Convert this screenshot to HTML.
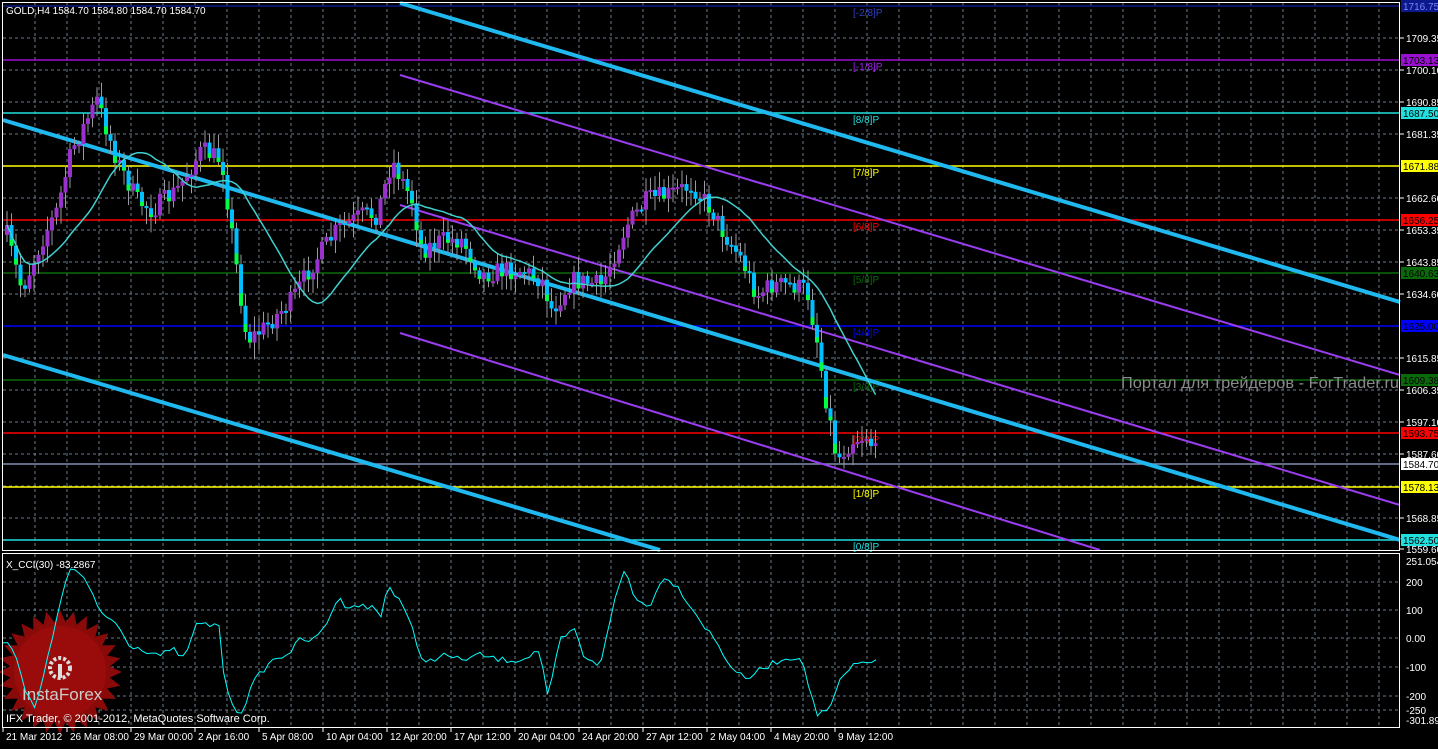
<!DOCTYPE html>
<html><head><meta charset="utf-8"><style>
html,body{margin:0;padding:0;background:#000;}
body{width:1438px;height:744px;overflow:hidden;font-family:"Liberation Sans",sans-serif;}
svg text{font-family:"Liberation Sans",sans-serif;font-size:10px;}
</style></head><body>
<svg id="s" width="1438" height="744" xmlns="http://www.w3.org/2000/svg">
<rect width="1438" height="744" fill="#000"/>
<g id="grid"></g>
<g id="levels"></g>
<g id="chan" stroke-linecap="butt">
<line x1="400" y1="3" x2="1400" y2="302" stroke="#1fb8ef" stroke-width="4"/>
<line x1="3" y1="120" x2="1400" y2="540" stroke="#1fb8ef" stroke-width="4"/>
<line x1="3" y1="355" x2="660" y2="550" stroke="#1fb8ef" stroke-width="4"/>
<line x1="400" y1="75" x2="1400" y2="375" stroke="#9a3df0" stroke-width="2"/>
<line x1="400" y1="205" x2="1400" y2="505" stroke="#9a3df0" stroke-width="2"/>
<line x1="400" y1="333" x2="1100" y2="550" stroke="#9a3df0" stroke-width="2"/>
</g>
<g id="candles"></g>
<polyline id="ma" fill="none" stroke="#40d0d0" stroke-width="1.5"/>
<text x="1121" y="388" fill="#8a8a8a" style="font-size:16px" textLength="278" lengthAdjust="spacingAndGlyphs">Портал для трейдеров - ForTrader.ru</text>
<g id="star"></g>
<polyline id="cci" fill="none" stroke="#00ffff" stroke-width="1"/>
<g id="axis"></g>
<text x="6" y="14" fill="#fff">GOLD,H4  1584.70 1584.80 1584.70 1584.70</text>
<text x="6" y="568" fill="#fff">X_CCI(30) -83.2867</text>
<text x="6" y="722" fill="#fff" style="font-size:11px">IFX Trader, © 2001-2012, MetaQuotes Software Corp.</text>
<rect x="2.5" y="2.5" width="1397" height="548" fill="none" stroke="#fff"/>
<rect x="2.5" y="553.5" width="1397" height="174" fill="none" stroke="#fff"/>
</svg>
<script>
(function(){
var NS="http://www.w3.org/2000/svg";
function el(t,a,p){var e=document.createElementNS(NS,t);for(var k in a)e.setAttribute(k,a[k]);(p||document.getElementById('s')).appendChild(e);return e;}
var grid=document.getElementById('grid'),axis=document.getElementById('axis'),lv=document.getElementById('levels');
for(var x=35;x<1400;x+=32){el('line',{x1:x,y1:3,x2:x,y2:550,stroke:'#6a7a8c','stroke-dasharray':'3,3'},grid);el('line',{x1:x,y1:554,x2:x,y2:727,stroke:'#6a7a8c','stroke-dasharray':'3,3'},grid);}
var hp=[[38,'1709.35'],[70,'1700.10'],[102,'1690.85'],[134,'1681.35'],[166,''],[198,'1662.60'],[230,'1653.35'],[262,'1643.85'],[294,'1634.60'],[326,''],[358,'1615.85'],[390,'1606.35'],[422,'1597.10'],[454,'1587.60'],[486,''],[518,'1568.85'],[549,'1559.60']];
hp.forEach(function(h){if(h[0]<549)el('line',{x1:3,y1:h[0],x2:1400,y2:h[0],stroke:'#6a7a8c','stroke-dasharray':'3,3'},grid);if(h[1]){el('line',{x1:1400,y1:h[0],x2:1404,y2:h[0],stroke:'#fff'},axis);var t=el('text',{x:1406,y:h[0]+4,fill:'#fff'},axis);t.textContent=h[1];}});
var L=[[6,'#0a1a8a','1716.75','[-2/8]P'],[60,'#9a10d0','1703.13','[-1/8]P'],[113,'#20e0e0','1687.50','[8/8]P'],[166,'#ffff00','1671.88','[7/8]P'],[220,'#ff0000','1656.25','[6/8]P'],[273,'#0a6a0a','1640.63','[5/8]P'],[326,'#0000ff','1625.00','[4/8]P'],[380,'#0a6a0a','1609.38','[3/8]P'],[433,'#ff0000','1593.75','[2/8]P'],[464,'#8090b0','1584.70',''],[487,'#ffff00','1578.13','[1/8]P'],[540,'#20e0e0','1562.50','[0/8]P']];
L.forEach(function(l){el('line',{x1:3,y1:l[0],x2:1400,y2:l[0],stroke:l[1],'stroke-width':1.5},lv);
var bg=l[1]=='#8090b0'?'#fff':l[1];el('rect',{x:1401,y:l[0]-6,width:37,height:12,fill:bg},axis);var t=el('text',{x:1403,y:l[0]+4,fill:l[1]=='#0a1a8a'?'#8080ff':'#000'},axis);t.textContent=l[2];
if(l[3]){var c=l[1]=='#0a1a8a'?'#3040c0':(l[1]=='#9a10d0'?'#a020f0':l[1]);var t2=el('text',{x:853,y:l[0]+10,fill:c},lv);t2.textContent=l[3];}});
[[561,'251.054'],[582,'200'],[610,'100'],[638,'0.00'],[667,'-100'],[696,'-200'],[710,'-250'],[720,'-301.894']].forEach(function(h){if(h[0]>565&&h[0]<715)el('line',{x1:3,y1:h[0],x2:1400,y2:h[0],stroke:'#6a7a8c','stroke-dasharray':'3,3'},grid);var t=el('text',{x:1406,y:h[0]+4,fill:'#fff'},axis);t.textContent=h[1];});
var tl=['21 Mar 2012','26 Mar 08:00','29 Mar 00:00','2 Apr 16:00','5 Apr 08:00','10 Apr 04:00','12 Apr 20:00','17 Apr 12:00','20 Apr 04:00','24 Apr 20:00','27 Apr 12:00','2 May 04:00','4 May 20:00','9 May 12:00'];
tl.forEach(function(s,i){var x=3+i*64;el('line',{x1:x,y1:728,x2:x,y2:732,stroke:'#fff'},axis);var t=el('text',{x:x+3,y:740,fill:'#fff'},axis);t.textContent=s;});
function interp(P,x){for(var i=0;i<P.length-1;i++){if(x>=P[i][0]&&x<=P[i+1][0]){var f=(x-P[i][0])/(P[i+1][0]-P[i][0]);return P[i][1]+f*(P[i+1][1]-P[i][1]);}}return P[P.length-1][1];}
var K=[[5,235],[20,290],[40,240],[55,210],[70,150],[95,100],[115,160],[135,200],[150,210],[175,190],[200,150],[220,160],[235,270],[245,340],[260,330],[290,300],[310,265],[335,230],[360,215],[375,215],[390,160],[410,200],[420,250],[440,240],[460,240],[480,275],[500,270],[520,270],[540,280],[550,310],[570,280],[600,285],[610,260],[625,225],[645,200],[665,195],[690,185],[710,210],[720,230],[740,260],[755,295],[770,285],[790,285],[805,290],[815,340],[825,405],[835,460],[850,440],[865,435],[876,458]];
var seed=7;function rnd(){seed=(seed*16807)%2147483647;return seed/2147483647;}
var cg=document.getElementById('candles');var prev=interp(K,5);var closes=[];
for(var x=5;x<=876;x+=4.5){var c=interp(K,x)+(rnd()-0.5)*20;var o=prev;var tp=Math.min(o,c),bt=Math.max(o,c);
el('line',{x1:x+2,y1:tp-3-rnd()*12,x2:x+2,y2:bt+3+rnd()*14,stroke:'#9a9aa0'},cg);
var h=Math.max(bt-tp,2);
if(c<o){el('rect',{x:x,y:tp,width:4,height:h,fill:'#9932cc'},cg);}
else{el('rect',{x:x,y:tp,width:4,height:h,fill:'#00bfff'},cg);if(h>8)el('rect',{x:x,y:bt-h*0.3,width:4,height:h*0.3,fill:'#00ff40'},cg);}
prev=c;closes.push([x+2,c]);}
var pts=[];for(var i=0;i<closes.length;i++){var s=0,n=0;for(var j=Math.max(0,i-18);j<=i;j++){s+=closes[j][1];n++;}pts.push(closes[i][0].toFixed(1)+','+(s/n).toFixed(1));}
document.getElementById('ma').setAttribute('points',pts.join(' '));
var C=[[3,640],[15,650],[25,690],[35,710],[50,650],[60,600],[72,566],[85,580],[100,612],[115,622],[130,645],[145,650],[160,655],[175,650],[185,660],[195,625],[210,625],[220,625],[225,690],[240,715],[255,680],[270,662],[290,652],[300,640],[315,640],[325,626],[338,598],[345,605],[355,605],[375,608],[380,620],[388,585],[400,600],[410,620],[420,660],[430,660],[445,655],[460,660],[480,655],[500,660],[520,660],[540,650],[548,700],[560,640],[575,630],[585,660],[600,665],[612,610],[625,568],[635,600],[650,605],[665,575],[680,590],[700,620],[715,640],[730,665],[745,680],[760,670],[780,660],[800,656],[810,690],[817,715],[830,710],[840,680],[855,665],[870,660],[880,664]];
var cp=[];for(var x=3;x<=880;x+=4.5){cp.push(x+','+(interp(C,x)+(rnd()-0.5)*6).toFixed(1));}
document.getElementById('cci').setAttribute('points',cp.join(' '));
var sg=document.getElementById('star');var sp=[];for(var i=0;i<56;i++){var a=i*Math.PI/28,r=i%2?50:62;sp.push((60+r*Math.cos(a)).toFixed(1)+','+(672+r*Math.sin(a)).toFixed(1));}
el('polygon',{points:sp.join(' '),fill:'#8a0a0a'},sg);
el('circle',{cx:60,cy:672,r:46,fill:'#9a0c0c'},sg);
el('circle',{cx:60,cy:668,r:10,fill:'none',stroke:'#ddd','stroke-width':4,'stroke-dasharray':'3,2'},sg);
el('rect',{x:58,y:664,width:4,height:14,fill:'#ddd'},sg);
var it=el('text',{x:22,y:700,fill:'#ccc',style:'font-size:17px'},sg);it.textContent='InstaForex';
})();
</script>
</body></html>
